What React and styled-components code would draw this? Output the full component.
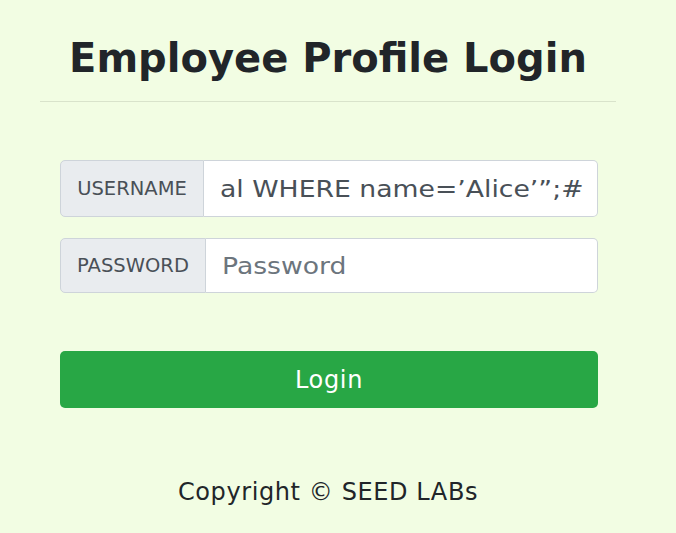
import React from "react";
import styled, { createGlobalStyle } from "styled-components";

const GlobalStyle = createGlobalStyle`
  html, body {
    margin: 0;
    padding: 0;
    background: #f2fde3;
    font-family: "DejaVu Sans", sans-serif;
  }
`;

const Page = styled.div`
  width: 676px;
  height: 533px;
  padding: 34px 0 0 40px;
  box-sizing: border-box;
`;

const Container = styled.div`
  width: 576px;
`;

const Title = styled.h1`
  margin: 0;
  font-size: 40px;
  line-height: 48px;
  font-weight: 700;
  color: #212529;
  text-align: center;
`;

const Divider = styled.hr`
  margin: 19px 0 0;
  border: 0;
  border-top: 1px solid rgba(0, 0, 0, 0.1);
`;

const Form = styled.form`
  display: flex;
  flex-direction: column;
  padding: 58px 18px 0 20px;
`;

const InputGroup = styled.div`
  display: flex;
  height: ${(p) => p.h}px;
  margin-bottom: 21px;
`;

const Label = styled.span`
  display: flex;
  align-items: center;
  justify-content: center;
  width: ${(p) => p.w}px;
  box-sizing: border-box;
  background: #e9ecef;
  border: 1px solid #ced4da;
  border-radius: 5px 0 0 5px;
  font-size: 19.5px;
  color: #495057;
`;

const Input = styled.div`
  flex: 1;
  display: flex;
  align-items: center;
  padding: 0 16px;
  background: #fff;
  border: 1px solid #ced4da;
  border-left: 0;
  border-radius: 0 5px 5px 0;
  font-size: 22.5px;
  color: ${(p) => (p.placeholder ? "#6c757d" : "#495057")};
  white-space: nowrap;
  overflow: hidden;
`;

const Value = styled.span`
  display: inline-block;
  transform: scaleX(1.185);
  transform-origin: left center;
`;

const Button = styled.button`
  margin-top: 37px;
  height: 57px;
  border: 0;
  border-radius: 5px;
  background: #28a745;
  color: #fff;
  font-family: "DejaVu Sans", sans-serif;
  font-size: 24px;
  letter-spacing: 0.7px;
`;

const Footer = styled.p`
  margin: 70px 0 0;
  text-align: center;
  font-size: 24px;
  letter-spacing: 0.6px;
  color: #212529;
`;

export default function App() {
  return (
    <Page>
      <GlobalStyle />
      <Container>
        <Title>Employee Profile Login</Title>
        <Divider />
        <Form onSubmit={(e) => e.preventDefault()}>
          <InputGroup h={57}>
            <Label w={144}>USERNAME</Label>
            <Input>
              <Value>al WHERE name=’Alice’”;#</Value>
            </Input>
          </InputGroup>
          <InputGroup h={55}>
            <Label w={146}>PASSWORD</Label>
            <Input placeholder>
              <Value>Password</Value>
            </Input>
          </InputGroup>
          <Button type="submit">Login</Button>
        </Form>
        <Footer>Copyright © SEED LABs</Footer>
      </Container>
    </Page>
  );
}
